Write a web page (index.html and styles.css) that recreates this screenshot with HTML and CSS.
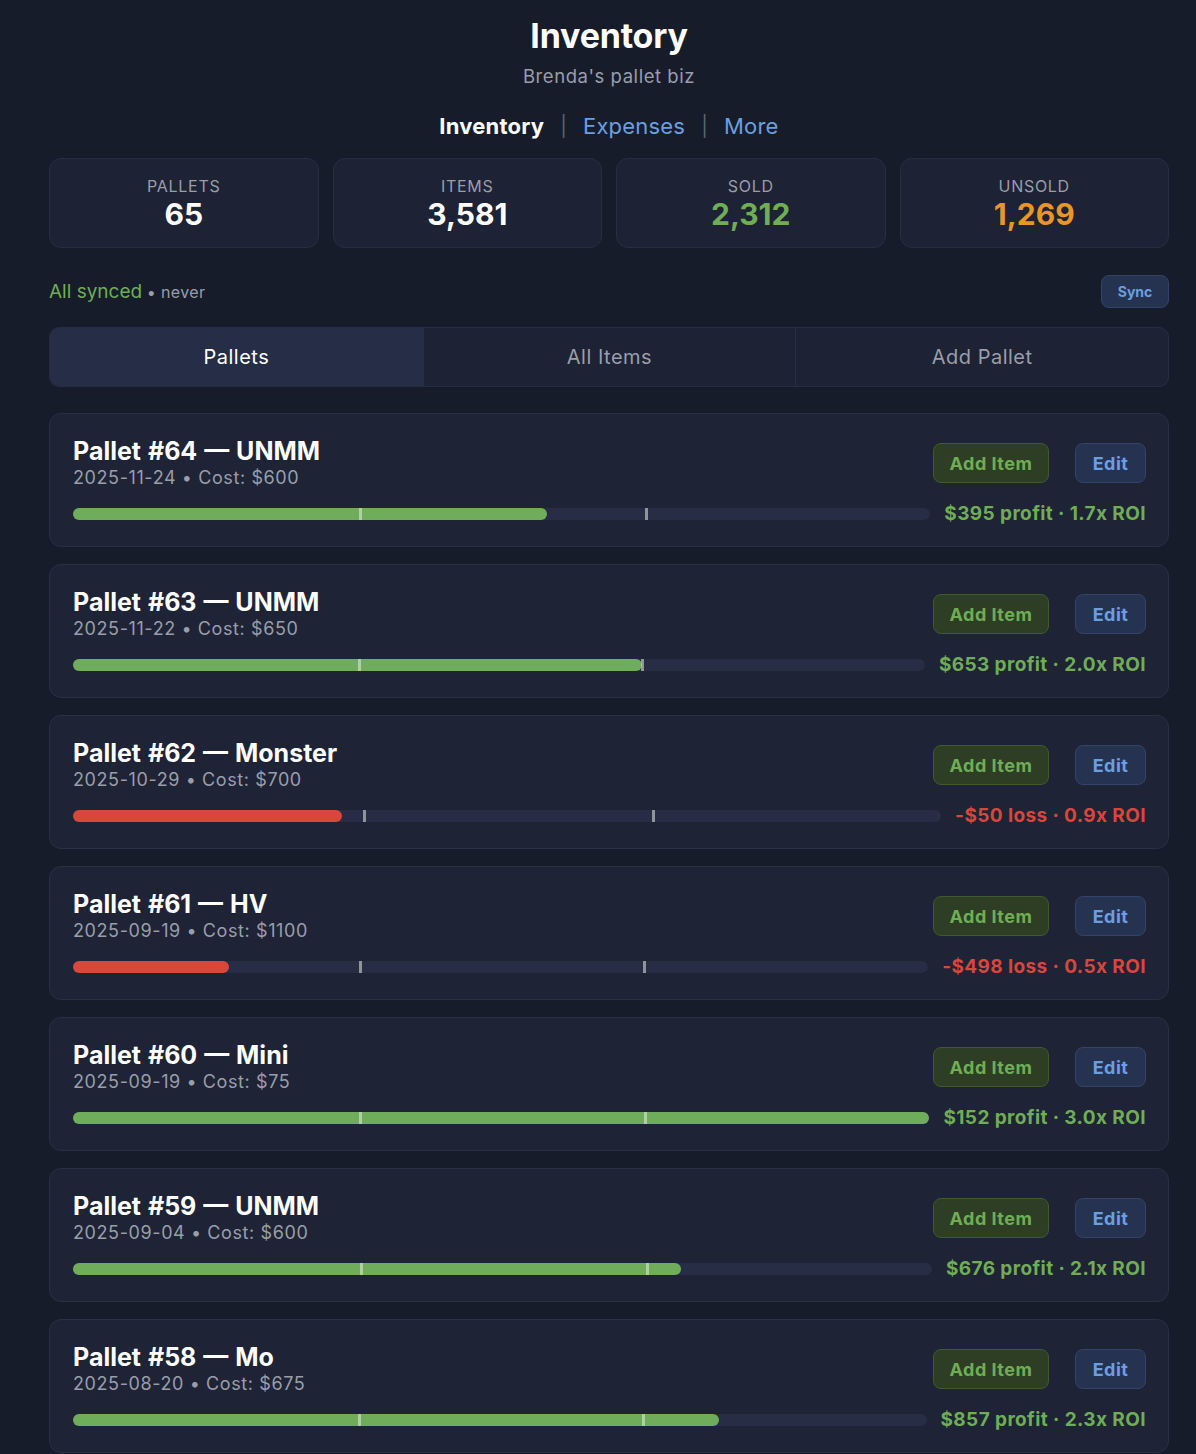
FILE: index.html
```html
<!DOCTYPE html>
<html lang="en">
<head>
<meta charset="utf-8">
<title>Inventory</title>
<link rel="stylesheet" href="styles.css">
</head>
<body>
<div class="page">
  <header class="head">
    <h1 class="title">Inventory</h1>
    <div class="subtitle">Brenda's pallet biz</div>
    <nav class="nav">
      <span class="nav-cur">Inventory</span>
      <span class="nav-sep">|</span>
      <a class="nav-link">Expenses</a>
      <span class="nav-sep">|</span>
      <a class="nav-link">More</a>
    </nav>
  </header>

  <section class="stats">
    <div class="stat"><div class="stat-label">PALLETS</div><div class="stat-val">65</div></div>
    <div class="stat"><div class="stat-label">ITEMS</div><div class="stat-val">3,581</div></div>
    <div class="stat"><div class="stat-label">SOLD</div><div class="stat-val green">2,312</div></div>
    <div class="stat"><div class="stat-label">UNSOLD</div><div class="stat-val orange">1,269</div></div>
  </section>

  <div class="syncrow">
    <div><span class="synced">All synced</span> <span class="never">• never</span></div>
    <button class="btn-sync">Sync</button>
  </div>

  <div class="tabs">
    <div class="tab active">Pallets</div>
    <div class="tab">All Items</div>
    <div class="tab">Add Pallet</div>
  </div>

  <div class="list">
    <div class="card">
      <div class="card-top">
        <div><div class="p-title">Pallet #64 — UNMM</div><div class="p-meta">2025-11-24 • Cost: $600</div></div>
        <div class="actions"><button class="btn-add">Add Item</button><button class="btn-edit">Edit</button></div>
      </div>
      <div class="card-bot">
        <div class="track"><div class="fill g" style="width:55.3%"></div><i class="tick t1"></i><i class="tick t2"></i></div>
        <div class="res green">$395 profit · 1.7x ROI</div>
      </div>
    </div>

    <div class="card">
      <div class="card-top">
        <div><div class="p-title">Pallet #63 — UNMM</div><div class="p-meta">2025-11-22 • Cost: $650</div></div>
        <div class="actions"><button class="btn-add">Add Item</button><button class="btn-edit">Edit</button></div>
      </div>
      <div class="card-bot">
        <div class="track"><div class="fill g" style="width:66.8%"></div><i class="tick t1"></i><i class="tick t2"></i></div>
        <div class="res green">$653 profit · 2.0x ROI</div>
      </div>
    </div>

    <div class="card">
      <div class="card-top">
        <div><div class="p-title">Pallet #62 — Monster</div><div class="p-meta">2025-10-29 • Cost: $700</div></div>
        <div class="actions"><button class="btn-add">Add Item</button><button class="btn-edit">Edit</button></div>
      </div>
      <div class="card-bot">
        <div class="track"><div class="fill r" style="width:31%"></div><i class="tick t1"></i><i class="tick t2"></i></div>
        <div class="res red">-$50 loss · 0.9x ROI</div>
      </div>
    </div>

    <div class="card">
      <div class="card-top">
        <div><div class="p-title">Pallet #61 — HV</div><div class="p-meta">2025-09-19 • Cost: $1100</div></div>
        <div class="actions"><button class="btn-add">Add Item</button><button class="btn-edit">Edit</button></div>
      </div>
      <div class="card-bot">
        <div class="track"><div class="fill r" style="width:18.3%"></div><i class="tick t1"></i><i class="tick t2"></i></div>
        <div class="res red">-$498 loss · 0.5x ROI</div>
      </div>
    </div>

    <div class="card">
      <div class="card-top">
        <div><div class="p-title">Pallet #60 — Mini</div><div class="p-meta">2025-09-19 • Cost: $75</div></div>
        <div class="actions"><button class="btn-add">Add Item</button><button class="btn-edit">Edit</button></div>
      </div>
      <div class="card-bot">
        <div class="track"><div class="fill g" style="width:100%"></div><i class="tick t1"></i><i class="tick t2"></i></div>
        <div class="res green">$152 profit · 3.0x ROI</div>
      </div>
    </div>

    <div class="card">
      <div class="card-top">
        <div><div class="p-title">Pallet #59 — UNMM</div><div class="p-meta">2025-09-04 • Cost: $600</div></div>
        <div class="actions"><button class="btn-add">Add Item</button><button class="btn-edit">Edit</button></div>
      </div>
      <div class="card-bot">
        <div class="track"><div class="fill g" style="width:70.8%"></div><i class="tick t1"></i><i class="tick t2"></i></div>
        <div class="res green">$676 profit · 2.1x ROI</div>
      </div>
    </div>

    <div class="card">
      <div class="card-top">
        <div><div class="p-title">Pallet #58 — Mo</div><div class="p-meta">2025-08-20 • Cost: $675</div></div>
        <div class="actions"><button class="btn-add">Add Item</button><button class="btn-edit">Edit</button></div>
      </div>
      <div class="card-bot">
        <div class="track"><div class="fill g" style="width:75.7%"></div><i class="tick t1"></i><i class="tick t2"></i></div>
        <div class="res green">$857 profit · 2.3x ROI</div>
      </div>
    </div>
  </div>
</div>
</body>
</html>
```

FILE: styles.css
```css
* { box-sizing: border-box; }
html, body { margin: 0; padding: 0; }
body {
  background: #171c2b;
  color: #ffffff;
  font-family: Inter, "Noto Sans", "Liberation Sans", sans-serif;
}
.page {
  width: 1120px;
  margin-left: 49px;
  padding-top: 16px;
}
.head { text-align: center; }
.title {
  margin: 0;
  font-size: 34px;
  font-weight: 700;
  line-height: 40px;
  letter-spacing: -0.2px;
}
.subtitle {
  margin-top: 8px;
  font-size: 18.5px;
  line-height: 24px;
  letter-spacing: 0.55px;
  color: #9a9eaa;
}
.nav {
  margin-top: 24px;
  display: flex;
  justify-content: center;
  align-items: center;
  gap: 16px;
  font-size: 22px;
  line-height: 28px;
  letter-spacing: 0.2px;
}
.nav-cur { font-weight: 700; color: #fff; }
.nav-sep { color: #5d6375; font-size: 20px; }
.nav-link { color: #6b9fe0; }

.stats {
  margin-top: 18px;
  display: grid;
  grid-template-columns: repeat(4, 1fr);
  gap: 14px;
}
.stat {
  height: 90px;
  background: #1d2234;
  border: 1px solid #282e41;
  border-radius: 12px;
  text-align: center;
  padding-top: 17px;
}
.stat-label {
  font-size: 16px;
  line-height: 20px;
  letter-spacing: 0.7px;
  color: #9a9eaa;
}
.stat-val {
  font-size: 30px;
  font-weight: 700;
  line-height: 36px;
}
.green { color: #6fad56; }
.orange { color: #e8952a; }
.red { color: #d9463b; }

.syncrow {
  margin-top: 27px;
  display: flex;
  justify-content: space-between;
  align-items: center;
}
.synced { color: #6fad56; font-size: 19px; }
.never { color: #9a9eaa; font-size: 16px; letter-spacing: 0.4px; }
.btn-sync {
  font-family: inherit;
  background: #263350;
  border: 1px solid #33426a;
  color: #6b9fe0;
  font-weight: 700;
  font-size: 14px;
  border-radius: 8px;
  width: 68px;
  height: 33px;
  padding: 0;
}

.tabs {
  margin-top: 19px;
  display: grid;
  grid-template-columns: repeat(3, 1fr);
  height: 60px;
  border: 1px solid #282e41;
  border-radius: 10px;
  overflow: hidden;
  background: #1d2234;
}
.tab {
  display: flex;
  align-items: center;
  justify-content: center;
  font-size: 20px;
  letter-spacing: 0.5px;
  color: #9a9eaa;
  border-left: 1px solid #282e41;
}
.tab:first-child { border-left: none; }
.tab.active { background: #262d46; color: #fff; }

.list {
  margin-top: 26px;
  display: flex;
  flex-direction: column;
  gap: 17px;
}
.card {
  background: #1e2335;
  border: 1px solid #2a3044;
  border-radius: 12px;
  padding: 22px 22px 20px 23px;
}
.card-top {
  display: flex;
  justify-content: space-between;
  align-items: center;
}
.p-title {
  font-size: 25px;
  font-weight: 700;
  line-height: 30px;
  letter-spacing: 0;
  word-spacing: 1px;
}
.p-meta {
  font-size: 18px;
  line-height: 24px;
  letter-spacing: 0.6px;
  color: #9a9eaa;
}
.actions { display: flex; gap: 26px; }
.btn-add, .btn-edit {
  font-family: inherit;
  font-weight: 700;
  font-size: 18px;
  letter-spacing: 0.5px;
  height: 40px;
  border-radius: 8px;
  padding: 0;
}
.btn-add {
  width: 116px;
  background: #2d3e24;
  border: 1px solid #3f5a2e;
  color: #6fad56;
}
.btn-edit {
  width: 71px;
  background: #263350;
  border: 1px solid #34436a;
  color: #6b9fe0;
}
.card-bot {
  margin-top: 12px;
  display: flex;
  align-items: center;
  gap: 14px;
}
.track {
  position: relative;
  flex: 1;
  height: 12px;
  background: #262d44;
  border-radius: 6px;
}
.fill {
  height: 100%;
  border-radius: 6px;
}
.fill.g { background: #6fad5a; }
.fill.r { background: #d9463b; }
.tick {
  position: absolute;
  top: 0;
  width: 3px;
  height: 12px;
  background: rgba(230, 235, 225, 0.55);
}
.t1 { left: 33.4%; }
.t2 { left: 66.7%; }
.res {
  font-size: 19px;
  font-weight: 700;
  line-height: 24px;
  letter-spacing: 0.4px;
  white-space: nowrap;
}
```
